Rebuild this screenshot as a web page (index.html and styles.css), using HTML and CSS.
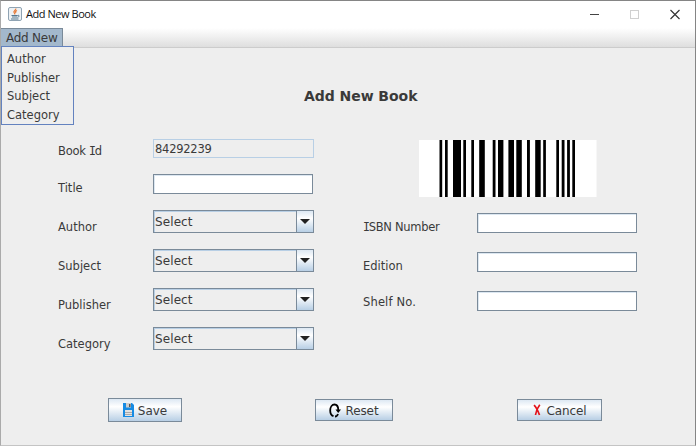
FILE: index.html
```html
<!DOCTYPE html>
<html lang="en">
<head>
<meta charset="utf-8">
<title>Add New Book</title>
<link rel="stylesheet" href="styles.css">
</head>
<body>
<div class="window">
  <header class="titlebar">
    <svg class="app-icon" width="14" height="14" viewBox="0 0 14 14">
      <rect x=".5" y=".5" width="13" height="13" rx="1.5" fill="#edf1f4" stroke="#8fa3b3"/>
      <path d="M7.800 1.500C8.500 3 5 4 6 5.300S7 6.500 6.800 7.500M9 3.500C7 4.500 7.300 5 8 6" fill="none" stroke="#e77a37" stroke-width="1.200"/>
      <path d="M3.500 8.500H9.500M4 10H9M3 12H10.500M9.500 8.500C12 7.800 11.500 10 9.300 10.300" fill="none" stroke="#557890"/>
    </svg>
    <span class="caption">Add New Book</span>
    <svg class="controls" width="92" height="12" viewBox="0 0 92 12">
      <path d="M1 5.500H10" stroke="#444"/>
      <rect x="41.500" y="1.500" width="8" height="8" fill="none" stroke="#d0d0d0"/>
      <path d="M81.500 1L90.500 10M90.500 1L81.500 10" stroke="#333" stroke-width="1.150"/>
    </svg>
  </header>
  <nav class="menubar">
    <div class="menu">Add New
      <ul class="menu-list"><li>Author</li><li>Publisher</li><li>Subject</li><li>Category</li></ul>
    </div>
  </nav>
  <main class="content">
    <h1>Add New Book</h1>
    <div class="form">
      <div class="column left">
        <div class="row r35"><label>Book <span class="cap-i">I</span>d</label><div class="field readonly">84292239</div></div>
        <div class="row r36"><label>Title</label><div class="field"></div></div>
        <div class="row"><label>Author</label><div class="combo"><span>Select</span><i></i></div></div>
        <div class="row"><label>Subject</label><div class="combo"><span>Select</span><i></i></div></div>
        <div class="row"><label>Publisher</label><div class="combo"><span>Select</span><i></i></div></div>
        <div class="row"><label>Category</label><div class="combo"><span>Select</span><i></i></div></div>
      </div>
      <div class="column right">
        <svg class="barcode" width="178" height="57" viewBox="0 0 178 57">
          <rect width="177.500" height="57" fill="#fff"/>
          <path d="M20.500 0h2.700v57h-2.700zM26 0h2.700v57H26zM34 0h8v57h-8zM44.300 0h2.700v57h-2.700zM52.300 0h2.700v57h-2.700zM60.200 0h5.600v57h-5.600zM73.700 0h2.800v57h-2.800zM79 0h5.400v57H79zM89.400 0h5.600v57h-5.600zM97.300 0h5.500v57h-5.500zM108 0h2.900v57H108zM116.200 0h5.500v57h-5.500zM124.200 0h2.700v57h-2.700zM137.300 0h2.700v57h-2.700zM142.700 0h2.800v57h-2.800zM148.100 0h2.800v57h-2.800zM153.300 0h2.700v57h-2.700z"/>
        </svg>
        <div class="row"><label class="isbn"><span class="cap-i">I</span>SBN Number</label><div class="field"></div></div>
        <div class="row"><label>Edition</label><div class="field"></div></div>
        <div class="row shelf"><label>Shelf No.</label><div class="field"></div></div>
      </div>
    </div>
    <div class="actions">
      <button class="save"><svg width="11" height="14" viewBox="0 0 11 14">
        <path d="M0 0h9l2 2v12H0z" fill="#168be4"/><path d="M3 0h5v4.500H3z" fill="#ccc"/><path d="M6 1h1.500v3H6z" fill="#555"/><path d="M2 7h7v6H2z" fill="#e2e2e2"/><path d="M2 9.500h7M2 11.500h7" stroke="#aaa"/></svg><span>Save</span></button>
      <button class="reset"><svg width="12" height="15" viewBox="0 0 12 15">
        <path d="M4.500 13.200C2.500 12.500 1.200 10 1.200 7.500C1.200 4 3 1.500 5.500 1.500C7.800 1.500 9.200 3.500 9.300 7M6 13.500C7.500 13.500 8.500 12.500 9 11" fill="none" stroke="#000" stroke-width="1.800"/><path d="M6.500 6.500H12L9.200 10z"/></svg><span>Reset</span></button>
      <button class="cancel"><svg width="8" height="12" viewBox="0 0 8 12">
        <path d="M1 1.200C3 3 5 7 6.500 11M6.800 .8C5 3 3 7 2.500 11" fill="none" stroke="#e3131b" stroke-width="1.700"/></svg><span>Cancel</span></button>
    </div>
  </main>
</div>
</body>
</html>
```
FILE: styles.css
```css
* { box-sizing: border-box; }
body { margin: 0; background: #eee; color: #3a3a3a; font: 12px/16px "DejaVu Sans", sans-serif; }
.window { width: 696px; height: 446px; overflow: hidden; border: 1px solid #858585; border-left-color: #aaa; border-bottom-color: #c4c4c4; }
.titlebar { display: flex; align-items: center; height: 27px; padding: 0 14px 0 7px; background: #fff; }
.app-icon { margin-bottom: 1px; }
.caption { margin: 0 0 1px 4px; color: #111; font: 11px/16px "Open Sans", sans-serif; letter-spacing: -.45px; }
.controls { margin-left: auto; }
.menubar { display: flex; height: 20px; background: linear-gradient(#fff, #dedede); border-bottom: 1px solid #ccc; }
.menu { position: relative; width: 62px; height: 19px; padding: 1px 5px; background: #a3b8cc; border: solid #7a8a99; border-width: 1px 1px 0 0; letter-spacing: -.25px; white-space: nowrap; }
.menu-list { position: absolute; z-index: 1; left: 0; top: 17px; width: 73px; height: 79px; margin: 0; padding: 3px 0 0 5px; list-style: none; border: 1px solid #6382bf; background: #eee; font-size: 11.5px; line-height: 18.7px; letter-spacing: 0; }
.content { padding-top: 38px; }
h1 { width: 120px; height: 20px; margin: 0 0 33px 303px; font: bold 14px/20px "DejaVu Sans", sans-serif; letter-spacing: -.05px; white-space: nowrap; }
.form { display: flex; height: 259px; padding-left: 57px; }
.left { width: 305px; }
.right { width: 274px; padding-top: 1px; }
.row { display: grid; grid-template-columns: 95px 161px; align-items: start; height: 39px; }
.r35 { height: 35px; }
.r36 { height: 36px; }
.right .row { grid-template-columns: 114px 160px; }
label { padding-top: 9px; font-size: 11.5px; letter-spacing: 0; white-space: nowrap; }
.r35 label { padding-top: 4px; letter-spacing: -.25px; }
.r36 label { padding-top: 6px; }
.right label { padding-top: 6px; }
.right .isbn { letter-spacing: -.3px; }
.right .shelf label { padding-top: 3px; letter-spacing: .15px; }
.cap-i { font-family: "DejaVu Sans Mono", monospace; letter-spacing: -1.2px; }
.field { width: 160px; height: 20px; border: 1px solid #7a8a99; background: #fff; box-shadow: inset 1px 1px #dce7f1; }
.readonly { width: 161px; height: 19px; padding-left: 1px; border-color: #b8cfe5; background: #eee; box-shadow: none; line-height: 19px; font-size: 11.5px; letter-spacing: -.25px; }
.combo { display: flex; height: 23px; border: 1px solid #7a8a99; box-shadow: inset 1px 1px #b8cfe5; }
.combo span { flex: 1; padding: 3px 1px; letter-spacing: .1px; }
.combo i { display: flex; align-items: center; justify-content: center; width: 17px; border-left: 1px solid #7a8a99; background: linear-gradient(#dde8f3, #fff 35%, #b8cfe5); }
.combo i::after { content: ""; border: solid transparent; border-width: 5px 5px 0; border-top-color: #222; }
.barcode { display: block; margin: 0 0 16px 56px; }
.actions { display: flex; align-items: center; height: 24px; padding-left: 107px; }
button { display: flex; align-items: center; justify-content: center; height: 22px; padding: 0; border: 1px solid #7a8a99; background: linear-gradient(#dde8f3, #fff 35%, #b8cfe5); color: #3a3a3a; font: inherit; }
button span { padding-top: 1px; }
.save { width: 74px; height: 24px; gap: 4px; margin-right: 133px; }
.reset { width: 78px; gap: 4px; margin-right: 124px; letter-spacing: -.1px; }
.cancel { width: 85px; gap: 6px; letter-spacing: -.15px; }
```
